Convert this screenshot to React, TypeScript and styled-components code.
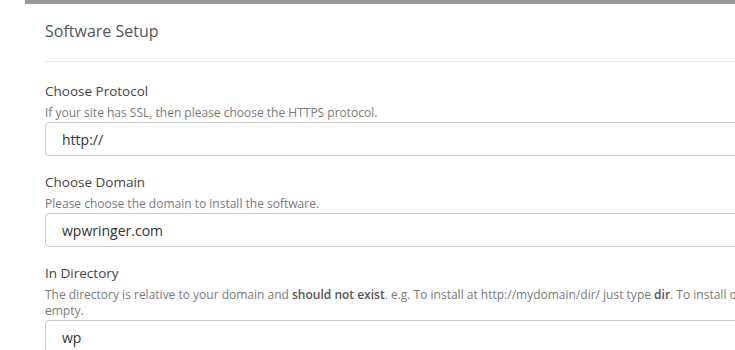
import styled, { createGlobalStyle } from "styled-components";

const GlobalStyle = createGlobalStyle`
  body {
    margin: 0;
    background: #ffffff;
    font-family: "Open Sans", "Noto Sans", Arial, sans-serif;
    overflow: hidden;
  }
`;

const fields = [
  {
    label: "Choose Protocol",
    help: <>If your site has SSL, then please choose the HTTPS protocol.</>,
    value: "http://",
  },
  {
    label: "Choose Domain",
    help: <>Please choose the domain to install the software.</>,
    value: "wpwringer.com",
  },
  {
    label: "In Directory",
    help: (
      <>
        The directory is relative to your domain and <b>should not exist</b>.
        e.g. To install at http://mydomain/dir/ just type <b>dir</b>. To install
        only in http://mydomain/ leave this empty.
      </>
    ),
    value: "wp",
  },
];

export default function App() {
  return (
    <>
      <GlobalStyle />
      <Card>
        <Header>
          <Title>Software Setup</Title>
        </Header>
        <Body>
          {fields.map((f) => (
            <Group key={f.label}>
              <Label>{f.label}</Label>
              <Help>{f.help}</Help>
              <Input type="text" defaultValue={f.value} />
            </Group>
          ))}
        </Body>
      </Card>
    </>
  );
}

//style
const Card = styled.div`
  margin-left: 25px;
  width: 945px;
  border-top: 4px solid #999999;
  background: #ffffff;
`;

const Header = styled.div`
  margin: 0 0 0 20px;
  height: 57px;
  display: flex;
  align-items: center;
  border-bottom: 1px solid #e8e8e8;
`;

const Title = styled.h2`
  margin: 0;
  font-size: 16px;
  font-weight: 400;
  color: #555555;
  line-height: 22px;
  padding-bottom: 3px;
`;

const Body = styled.div`
  padding: 20px 20px 0 20px;
  display: flex;
  flex-direction: column;
  gap: 17px;
`;

const Group = styled.div`
  display: flex;
  flex-direction: column;
`;

const Label = styled.label`
  font-size: 13.5px;
  font-weight: 400;
  color: #444444;
  line-height: 18px;
  margin-bottom: 5px;
`;

const Help = styled.div`
  font-size: 12px;
  color: #7a7a7a;
  line-height: 16px;
  margin-bottom: 1px;
  b {
    font-weight: 600;
    color: #555555;
  }
`;

const Input = styled.input`
  box-sizing: border-box;
  height: 34px;
  padding: 0 16px;
  border: 1px solid #cccccc;
  border-radius: 4px;
  font-family: "Open Sans", "Noto Sans", Arial, sans-serif;
  font-size: 14px;
  color: #333333;
  background: #ffffff;
  outline: none;
`;
